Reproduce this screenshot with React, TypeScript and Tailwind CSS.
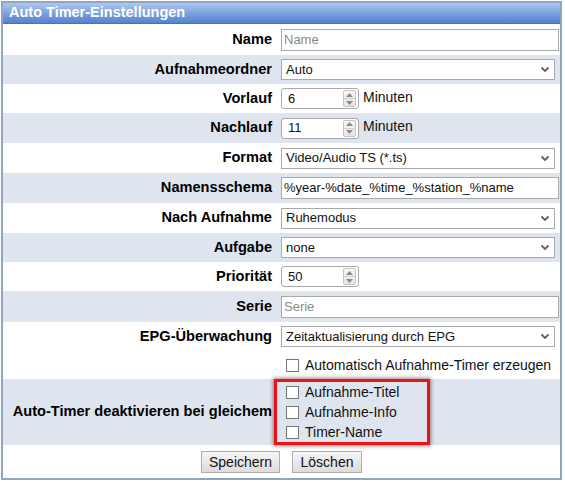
import React from "react";

const rowBg = "bg-[#dfe5ef]";

function Chevron() {
  return (
    <svg width="10" height="7" viewBox="0 0 10 7" className="shrink-0">
      <path d="M1.5 1.5 L5 5 L8.5 1.5" fill="none" stroke="#606060" strokeWidth="1.8" />
    </svg>
  );
}

function Select({ value }: { value: string }) {
  return (
    <div className="flex h-[21px] w-[274px] items-center justify-between border border-[#a9a9a9] bg-white pl-[4px] pr-[4px] text-[13px] text-[#111]">
      <span>{value}</span>
      <Chevron />
    </div>
  );
}

function TextBox({ value, placeholder }: { value?: string; placeholder?: string }) {
  return (
    <div className="flex h-[22px] w-[278px] items-center border border-[#a9a9a9] bg-white pl-[2px] text-[13px]">
      {value ? <span className="text-[#111]">{value}</span> : <span className="text-[#8a8a8a]">{placeholder}</span>}
    </div>
  );
}

function NumberBox({ value, unit }: { value: string; unit?: string }) {
  return (
    <div className="flex items-center">
      <div className="flex h-[21px] w-[78px] items-center rounded-[3px] border border-[#a9a9a9] bg-white">
        <span className="flex-1 pl-[6px] text-[13px] text-[#111]">{value}</span>
        <div className="mr-[2px] flex h-[17px] w-[13px] flex-col rounded-[2px] border border-[#c4c4c4] bg-gradient-to-b from-[#f7f7f7] to-[#e6e6e6]">
          <div className="flex flex-1 items-center justify-center border-b border-[#d0d0d0]">
            <svg width="7" height="4" viewBox="0 0 7 4">
              <path d="M0 4 L3.5 0 L7 4 Z" fill="#8a8a8a" />
            </svg>
          </div>
          <div className="flex flex-1 items-center justify-center">
            <svg width="7" height="4" viewBox="0 0 7 4">
              <path d="M0 0 L3.5 4 L7 0 Z" fill="#8a8a8a" />
            </svg>
          </div>
        </div>
      </div>
      {unit && <span className="ml-[4px] -mt-[3px] text-[14px] text-[#111]">{unit}</span>}
    </div>
  );
}

function Check({ label }: { label: string }) {
  return (
    <div className="flex h-[20px] items-center gap-[6px] pl-[5px]">
      <div className="h-[13px] w-[13px] border border-[#767676] bg-white" />
      <span className="text-[14px] text-[#111]">{label}</span>
    </div>
  );
}

function Row({
  label,
  h,
  gray,
  children,
}: {
  label: string;
  h: string;
  gray?: boolean;
  children?: React.ReactNode;
}) {
  return (
    <div className={`flex items-center ${h} ${gray ? rowBg : "bg-white"}`}>
      <div className="w-[274px] shrink-0 pr-[5px] text-right text-[14.6px] font-bold text-black">{label}</div>
      <div className="flex flex-1 items-center pl-[4px]">{children}</div>
    </div>
  );
}

export default function App() {
  return (
    <div className="ml-[1px] mt-[1px] w-[561px] border-2 border-[#8ea5c4] bg-white font-['Liberation_Sans',Arial,sans-serif]">
      <div className="flex h-[21px] items-center border-b border-[#4773bd] bg-gradient-to-b from-[#afc7ee] via-[#7ea2de] to-[#5482cf] pl-[6px] text-[14.5px] font-bold text-white">
        Auto Timer-Einstellungen
      </div>
      <Row label="Name" h="h-[31px]">
        <TextBox placeholder="Name" />
      </Row>
      <Row label="Aufnahmeordner" h="h-[29px]" gray>
        <Select value="Auto" />
      </Row>
      <Row label="Vorlauf" h="h-[29px]">
        <NumberBox value="6" unit="Minuten" />
      </Row>
      <Row label="Nachlauf" h="h-[30px]" gray>
        <NumberBox value="11" unit="Minuten" />
      </Row>
      <Row label="Format" h="h-[30px]">
        <Select value="Video/Audio TS (*.ts)" />
      </Row>
      <Row label="Namensschema" h="h-[30px]" gray>
        <TextBox value="%year-%date_%time_%station_%name" />
      </Row>
      <Row label="Nach Aufnahme" h="h-[30px]">
        <Select value="Ruhemodus" />
      </Row>
      <Row label="Aufgabe" h="h-[29px]" gray>
        <Select value="none" />
      </Row>
      <Row label="Priorität" h="h-[29px]">
        <NumberBox value="50" />
      </Row>
      <Row label="Serie" h="h-[31px]" gray>
        <TextBox placeholder="Serie" />
      </Row>
      <Row label="EPG-Überwachung" h="h-[29px]">
        <Select value="Zeitaktualisierung durch EPG" />
      </Row>
      <Row label="" h="h-[28px]">
        <Check label="Automatisch Aufnahme-Timer erzeugen" />
      </Row>
      <div className={`relative flex h-[66px] items-center ${rowBg}`}>
        <div className="w-[274px] shrink-0 pr-[5px] text-right text-[14.6px] font-bold text-black">
          Auto-Timer deaktivieren bei gleichem
        </div>
        <div className="flex flex-1 flex-col pl-[4px]">
          <Check label="Aufnahme-Titel" />
          <Check label="Aufnahme-Info" />
          <Check label="Timer-Name" />
        </div>
        <div className="absolute left-[271px] top-0 h-[66px] w-[156px] border-[3px] border-[#ee1111] shadow-[0_0_4px_1px_rgba(0,0,0,0.45)]" />
      </div>
      <div className="flex h-[33px] items-center justify-center gap-[12px] bg-white">
        <button className="h-[22px] w-[79px] border border-[#adadad] bg-gradient-to-b from-[#f6f6f6] to-[#dcdcdc] text-[14px] text-[#111]">
          Speichern
        </button>
        <button className="h-[22px] w-[70px] border border-[#adadad] bg-gradient-to-b from-[#f6f6f6] to-[#dcdcdc] text-[14px] text-[#111]">
          Löschen
        </button>
      </div>
    </div>
  );
}
